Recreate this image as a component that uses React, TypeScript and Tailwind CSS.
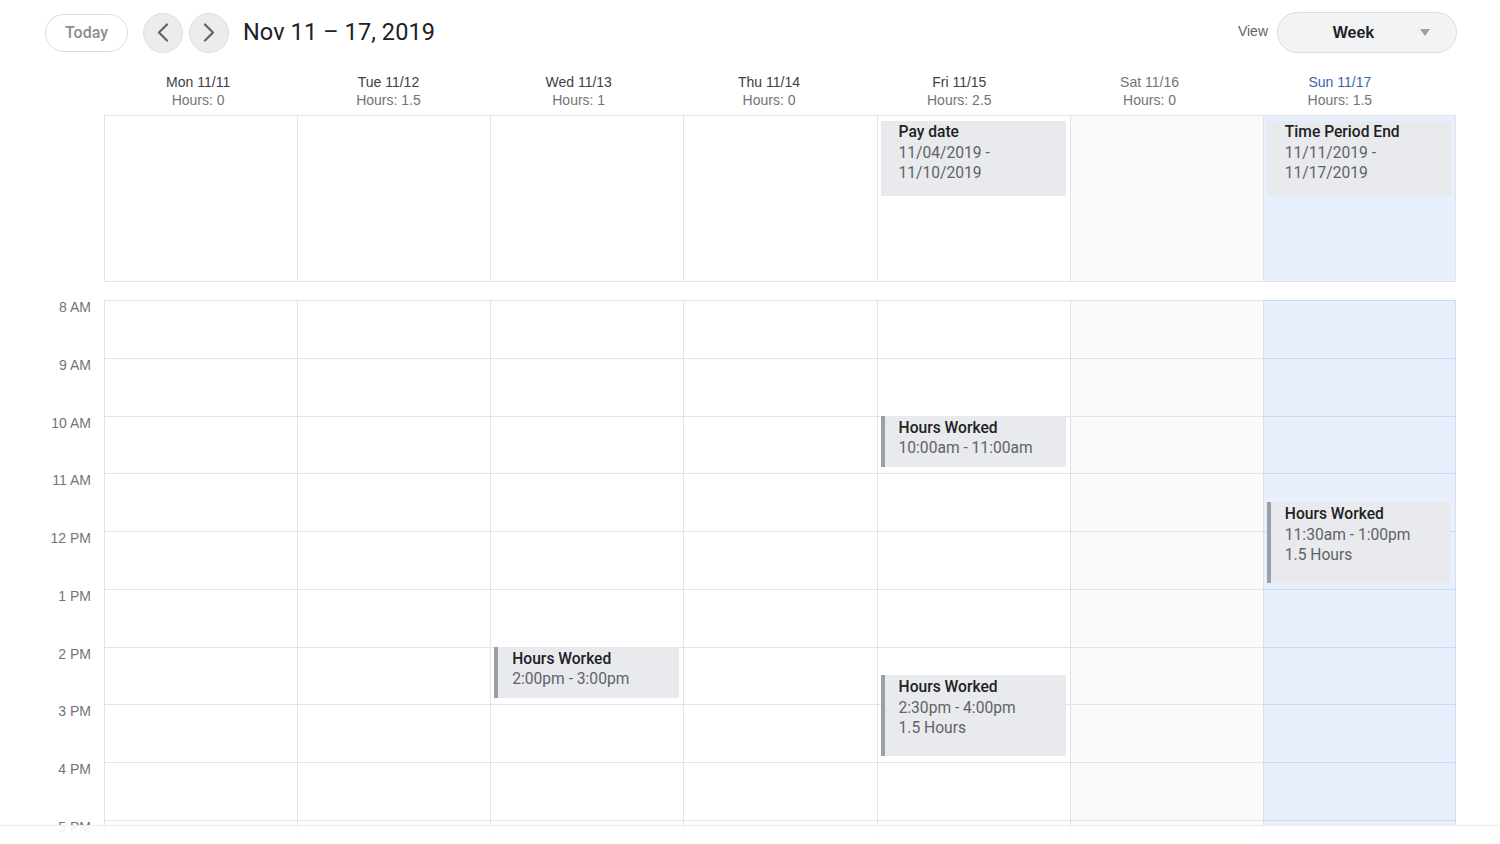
import React from "react";

const days = [
  { label: "Mon 11/11", hours: "0" },
  { label: "Tue 11/12", hours: "1.5" },
  { label: "Wed 11/13", hours: "1" },
  { label: "Thu 11/14", hours: "0" },
  { label: "Fri 11/15", hours: "2.5" },
  { label: "Sat 11/16", hours: "0", weekend: true },
  { label: "Sun 11/17", hours: "1.5", today: true },
];

const hourLabels = ["8 AM", "9 AM", "10 AM", "11 AM", "12 PM", "1 PM", "2 PM", "3 PM", "4 PM", "5 PM", "6 PM"];

const ROW = 57.75;

interface TimedEvent {
  day: number;
  start: number; // hours after 8 AM
  length: number;
  lines: string[];
}

const timed: TimedEvent[] = [
  { day: 4, start: 2, length: 1, lines: ["10:00am - 11:00am"] },
  { day: 6, start: 3.5, length: 1.5, lines: ["11:30am - 1:00pm", "1.5 Hours"] },
  { day: 2, start: 6, length: 1, lines: ["2:00pm - 3:00pm"] },
  { day: 4, start: 6.5, length: 1.5, lines: ["2:30pm - 4:00pm", "1.5 Hours"] },
];

const allDay: Record<number, { title: string; lines: string[] }> = {
  4: { title: "Pay date", lines: ["11/04/2019 -", "11/10/2019"] },
  6: { title: "Time Period End", lines: ["11/11/2019 -", "11/17/2019"] },
};

function colBg(i: number) {
  if (i === 6) return "bg-[#e8f0fe]";
  if (i === 5) return "bg-[#fafafa]";
  return "bg-white";
}

function Chevron({ dir }: { dir: "left" | "right" }) {
  return (
    <svg width="12" height="19" viewBox="0 0 12 19" fill="none" stroke="#5f6368" strokeWidth={2.2} strokeLinecap="round" strokeLinejoin="round">
      {dir === "left" ? <polyline points="10,1.5 2,9.5 10,17.5" /> : <polyline points="2,1.5 10,9.5 2,17.5" />}
    </svg>
  );
}

function EventText({ title, lines }: { title: string; lines: string[] }) {
  return (
    <div className="font-['Roboto',sans-serif] text-[15.6px] leading-[20.5px]">
      <div className="font-medium text-[#202124]">{title}</div>
      {lines.map((l) => (
        <div key={l} className="text-[#5f6368]">
          {l}
        </div>
      ))}
    </div>
  );
}

export default function App() {
  return (
    <div className="relative w-[1500px] h-[844px] overflow-hidden bg-white font-['Liberation_Sans',Arial,sans-serif]">
      {/* toolbar */}
      <div className="h-[65px] flex items-center pl-[45px] pr-[43px]">
        <button className="w-[83px] h-[38px] rounded-full border border-[#dadce0] text-[16px] font-medium text-[#8a8e93] font-['Roboto',sans-serif]">
          Today
        </button>
        <div className="flex gap-[6px] ml-[15px]">
          <button className="w-[40px] h-[40px] rounded-full bg-[#ececec] border border-[#dedede] flex items-center justify-center">
            <Chevron dir="left" />
          </button>
          <button className="w-[40px] h-[40px] rounded-full bg-[#ececec] border border-[#dedede] flex items-center justify-center">
            <Chevron dir="right" />
          </button>
        </div>
        <h1 className="ml-[14px] text-[23.5px] text-[#202124] font-['Roboto',sans-serif] tracking-[0.1px]">Nov 11 – 17, 2019</h1>
        <div className="ml-auto flex items-center">
          <span className="text-[14px] text-[#5f6368] mr-[9px] -mt-[3px]">View</span>
          <button className="relative w-[180px] h-[41px] rounded-full bg-[#f1f3f4] border border-[#dadce0] flex items-center justify-center">
            <span className="text-[16px] font-semibold text-[#202124] -ml-[27px]">Week</span>
            <svg className="absolute right-[26px] top-[16px]" width="10" height="7" viewBox="0 0 10 7">
              <polygon points="0,0 10,0 5,7" fill="#9aa0a6" />
            </svg>
          </button>
        </div>
      </div>

      {/* day headers */}
      <div className="ml-[103px] w-[1332px] h-[50px] grid grid-cols-7 pt-[8px] text-[14px] leading-[18px] text-center">
        {days.map((d) => (
          <div key={d.label}>
            <div className={d.today ? "text-[#3d63b0]" : d.weekend ? "text-[#70757a]" : "text-[#3c4043]"}>{d.label}</div>
            <div className="text-[#70757a]">Hours: {d.hours}</div>
          </div>
        ))}
      </div>

      {/* all-day area */}
      <div className="ml-[104px] w-[1352px] h-[167px] grid grid-cols-7 border-y border-[#e3e3e3]">
        {days.map((d, i) => (
          <div key={d.label} className={`relative border-l border-[#e3e3e3] ${i === 6 ? "border-r" : ""} ${colBg(i)}`}>
            {allDay[i] && (
              <div className="absolute left-[3px] right-[4px] top-[5px] h-[75px] bg-[#e8eaed] pl-[18px] pt-[1px]">
                <EventText title={allDay[i].title} lines={allDay[i].lines} />
              </div>
            )}
          </div>
        ))}
      </div>

      {/* time grid */}
      <div className="flex mt-[18px]">
        <div className="w-[104px] shrink-0 flex flex-col">
          {hourLabels.map((h) => (
            <div key={h} className="h-[57.75px] pr-[13px] text-right text-[14px] leading-[18px] text-[#70757a] -mt-[2px] mb-[2px]">
              {h}
            </div>
          ))}
        </div>
        <div className="w-[1352px] grid grid-cols-7">
          {days.map((d, i) => (
            <div key={d.label} className={`relative flex flex-col border-l ${i === 6 ? "border-r border-[#d5def0]" : "border-[#e3e3e3]"} ${colBg(i)}`}>
              {hourLabels.map((h) => (
                <div key={h} className={`h-[57.75px] shrink-0 border-t ${i === 6 ? "border-[#cfd9ee]" : "border-[#e3e3e3]"}`} />
              ))}
              {timed
                .filter((e) => e.day === i)
                .map((e) => (
                  <div
                    key={e.lines[0]}
                    className="absolute left-[3px] right-[4px] bg-[#e8eaed] border-l-4 border-[#9aa0a6] pl-[14px] pt-[2px]"
                    style={{ top: e.start * ROW, height: e.length * ROW - 6 }}
                  >
                    <EventText title="Hours Worked" lines={e.lines} />
                  </div>
                ))}
            </div>
          ))}
        </div>
      </div>

      {/* bottom fade */}
      <div className="absolute left-0 right-0 bottom-0 h-[19px] bg-white/90 border-t border-[#ececec]" />
    </div>
  );
}
